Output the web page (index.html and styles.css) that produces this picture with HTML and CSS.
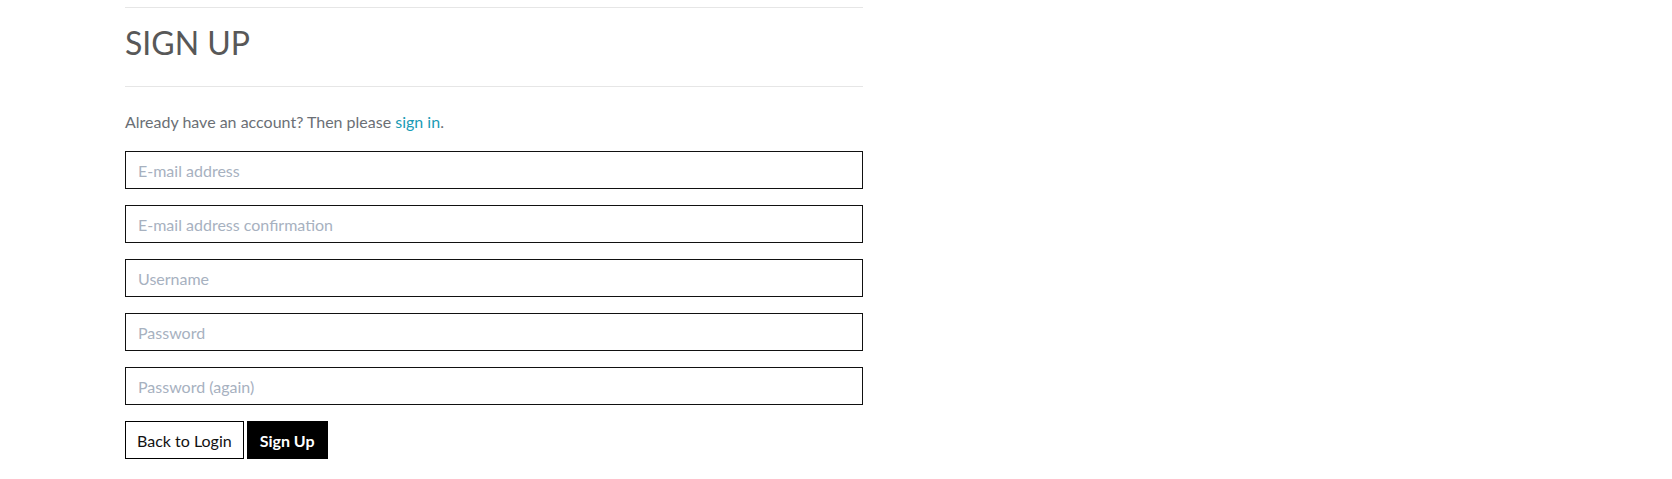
FILE: index.html
```html
<!DOCTYPE html>
<html>
<head>
<meta charset="utf-8">
<link rel="stylesheet" href="styles.css">
</head>
<body>
<div class="page">
  <div class="card">
    <div class="title-bar">
      <h1 class="title">SIGN UP</h1>
    </div>
    <p class="intro">Already have an account? Then please <a class="link" href="#">sign in</a>.</p>
    <form class="form">
      <input class="field" type="email" placeholder="E-mail address">
      <input class="field" type="email" placeholder="E-mail address confirmation">
      <input class="field" type="text" placeholder="Username">
      <input class="field" type="password" placeholder="Password">
      <input class="field" type="password" placeholder="Password (again)">
      <div class="actions">
        <a class="btn btn-light" href="#">Back to Login</a>
        <button class="btn btn-dark" type="button">Sign Up</button>
      </div>
    </form>
  </div>
</div>
</body>
</html>
```
FILE: styles.css
```css
html, body {
  margin: 0;
  padding: 0;
  background: #fff;
}
body {
  font-family: Lato, "Open Sans", sans-serif;
  color: #6b6f75;
}
.page {
  padding: 7px 0 0 125px;
}
.card {
  width: 738px;
}
.title-bar {
  border-top: 1px solid #e6e6e6;
  border-bottom: 1px solid #e6e6e6;
  height: 78px;
  display: flex;
  align-items: center;
}
.title {
  margin: 0;
  font-size: 32px;
  font-weight: 400;
  color: #585858;
  line-height: 1;
  padding-bottom: 8px;
}
.intro {
  margin: 23px 0 0;
  font-size: 16px;
  line-height: 24px;
  color: #6b6f75;
}
.link {
  color: #1a9bb5;
  text-decoration: none;
}
.form {
  margin-top: 17px;
  display: flex;
  flex-direction: column;
  gap: 16px;
}
.field {
  box-sizing: border-box;
  width: 738px;
  height: 38px;
  border: 1px solid #111;
  border-radius: 0;
  padding: 0 12px;
  font-family: Lato, sans-serif;
  font-size: 16px;
  color: #333;
  background: #fff;
  outline: none;
}
.field::placeholder {
  color: #a7b1bf;
}
.actions {
  display: flex;
  gap: 3px;
}
.btn {
  box-sizing: border-box;
  height: 38px;
  display: inline-flex;
  align-items: center;
  padding: 0 11px;
  font-family: Lato, sans-serif;
  font-size: 16px;
  border: 1px solid #000;
  border-radius: 0;
  text-decoration: none;
  cursor: pointer;
}
.btn-light {
  background: #fff;
  color: #111;
}
.btn-dark {
  background: #000;
  color: #fff;
  font-weight: 700;
  padding: 0 12px;
}
```
